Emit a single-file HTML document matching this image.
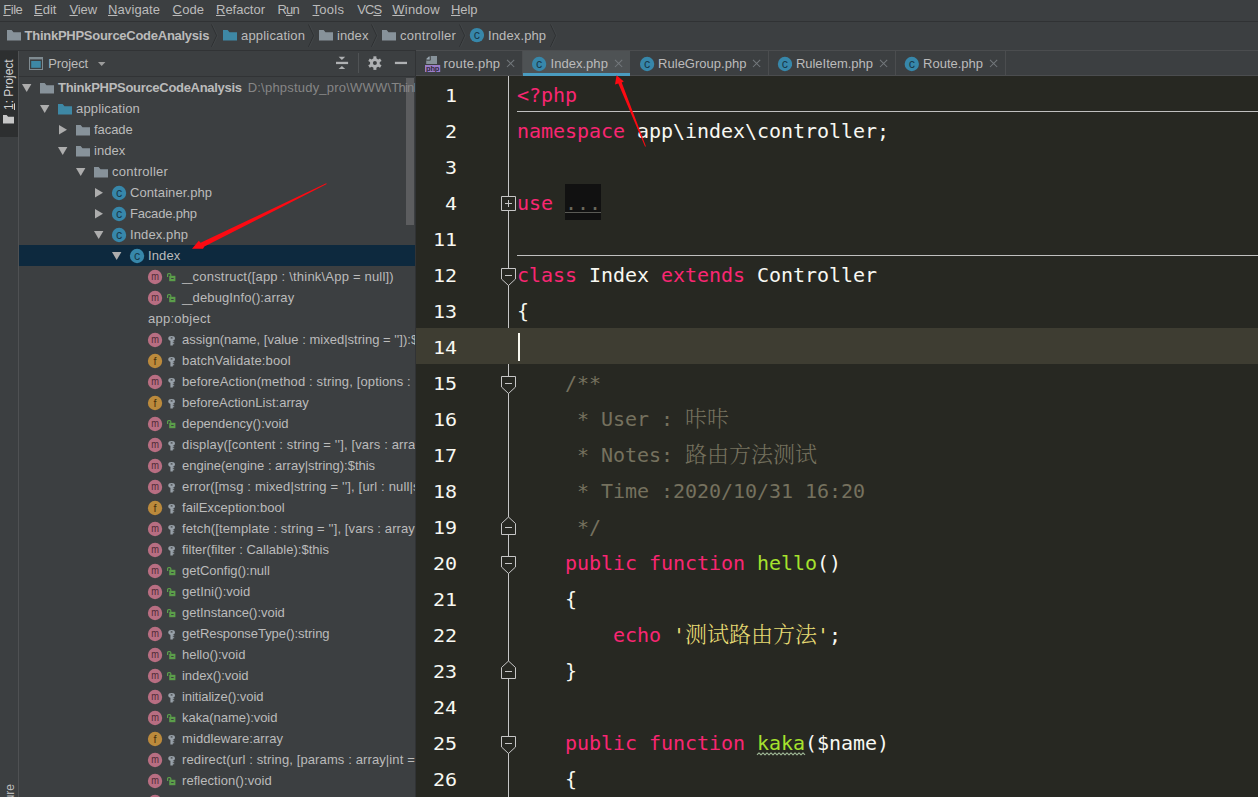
<!DOCTYPE html>
<html><head><meta charset="utf-8"><title>ThinkPHPSourceCodeAnalysis</title>
<style>
*{box-sizing:border-box;margin:0;padding:0}
html,body{width:1258px;height:797px;overflow:hidden;background:#3c3f41}
body{font-family:"Liberation Sans","Noto Sans CJK SC",sans-serif;font-size:13px;color:#bbbbbb;position:relative}
svg{display:block}
#menubar{position:absolute;left:0;top:0;width:1258px;height:22px;background:#3c3f41;border-bottom:1px solid #303234}
#menubar span{position:absolute;top:1px;line-height:17px;white-space:pre}
#menubar u{text-decoration:underline;text-underline-offset:1px;text-decoration-thickness:1px}
#crumbs{position:absolute;left:0;top:22px;width:1258px;height:29px;background:#3c3f41}
#crumbs .bl{position:absolute;left:0;top:28px;width:416px;height:1px;background:#313335}
#crumbs .br{position:absolute;left:416px;top:28px;width:842px;height:1px;background:#4b4d4f}
#crumbs .i{position:absolute}
#crumbs .t{position:absolute;top:4.5px;line-height:18px;white-space:pre}
#crumbs .sep{position:absolute;top:2px}
#strip{position:absolute;left:0;top:51px;width:19px;height:746px;background:#3c3f41;border-right:1px solid #4f5153}
#strip .on{position:absolute;left:0;top:0;width:18px;height:86px;background:#2d2f30}
#strip .vt u{text-underline-offset:0.5px}
#strip .vt{position:absolute;white-space:pre;transform-origin:0 0;transform:rotate(-90deg);line-height:14px;color:#d2d2d2;font-size:12px}
#proj{position:absolute;left:19px;top:51px;width:397px;height:746px;background:#3c3f41;overflow:hidden;border-right:1px solid #313335}
#phead{position:absolute;left:0;top:0;width:396px;height:26px;border-bottom:1px solid #313335}
#phead svg{position:absolute}
#tree{position:absolute;left:0;top:26px;width:396px;height:720px;overflow:hidden}
.row{position:absolute;left:0;width:396px;height:21px}
.row.sel{background:#0d293e}
.row .a,.row .i,.row .v{position:absolute}
.row .t{position:absolute;top:2px;line-height:18px;white-space:pre}
.row b{font-weight:bold;letter-spacing:-0.3px}
.pth{color:#868686;margin-left:6px}
#thumb{position:absolute;left:387px;top:27px;width:8px;height:147px;background:#5c5d5f}
#ed{position:absolute;left:416px;top:51px;width:842px;height:746px;background:#272822;overflow:hidden}
#tabs{position:absolute;left:0;top:0;width:842px;height:25px;background:#3c3f41;border-bottom:1px solid #4b4d4f}
.tab{position:absolute;top:0;height:24px;border-right:1px solid #4b4d4f}
.tab.act{background:#4e5254;height:25px;border-bottom:3px solid #4a9cc0;border-right:none}
.tab .ti{position:absolute}
.tab .tt{position:absolute;top:3.5px;line-height:18px;white-space:pre}
.tab .tx{position:absolute;top:8px}
#code{position:absolute;left:0;top:25px;width:842px;height:722px;letter-spacing:-0.04px;font-family:"DejaVu Sans Mono","Liberation Mono","Noto Serif CJK SC",monospace;font-size:20px;color:#f8f8f2}
.ln{position:absolute;left:0;width:842px;height:36px;line-height:36px;white-space:pre}
.ln.cur{background:#3e3d32}
.no{position:absolute;right:801px;top:1px;color:#f8f8f2;transform:scaleY(0.92);transform-origin:0 25px}
.cd{position:absolute;left:101px;top:1px}
.k{color:#f92672}.f{color:#a6e22e}.s{color:#e6db74}.c{color:#75715e}
.zh{font-family:"Noto Serif CJK SC",serif;font-size:22px;font-weight:300;letter-spacing:0;line-height:0}
.fold{background:#111111;color:#6a695d;display:inline-block;height:36px;position:relative;top:-1px;line-height:38px;vertical-align:top}
.fold i{position:absolute;left:0;right:0;top:28px;height:1px;background:#5a5a55}
.typo{text-decoration:underline wavy #7a9a50;text-decoration-thickness:1px;text-underline-offset:3px}
#foldline{position:absolute;left:92px;top:0;width:1px;height:722px;background:#c6c6c6}
.fi{position:absolute;left:85px}
.hsep{position:absolute;left:101px;width:741px;height:1px;background:#c0c0c0}
#caret{position:absolute;left:101.5px;top:257px;width:2px;height:28px;background:#f8f8f0}
#arrows{position:absolute;left:0;top:0;width:1258px;height:797px;pointer-events:none}
</style></head><body>
<div id="menubar"><span style="left:3.3px;letter-spacing:-0.488px;"><u>F</u>ile</span><span style="left:34px;letter-spacing:0.023px;"><u>E</u>dit</span><span style="left:69.5px;letter-spacing:-0.113px;"><u>V</u>iew</span><span style="left:108px;letter-spacing:0.098px;"><u>N</u>avigate</span><span style="left:172.6px;letter-spacing:0.13px;"><u>C</u>ode</span><span style="left:216px;letter-spacing:-0.018px;"><u>R</u>efactor</span><span style="left:277.4px;letter-spacing:-0.786px;">R<u>u</u>n</span><span style="left:312.5px;letter-spacing:0.288px;"><u>T</u>ools</span><span style="left:357.3px;letter-spacing:-0.978px;">VC<u>S</u></span><span style="left:392.3px;letter-spacing:0.208px;"><u>W</u>indow</span><span style="left:451px;letter-spacing:-0.087px;"><u>H</u>elp</span></div>
<div id="crumbs"><div class="bl"></div><div class="br"></div>
<span class="i" style="left:7px;top:7.5px"><svg class="ic" width="14" height="11" viewBox="0 0 14 11"><path d="M0 0h4.6l1.9 2.2H14v8.3H0z" fill="#87929a"/></svg></span><span class="t" style="left:24.6px"><b style="letter-spacing:-0.267px;">ThinkPHPSourceCodeAnalysis</b></span><svg class="sep" style="left:211px" width="8" height="24" viewBox="0 0 8 24"><path d="M0.5 0.5L5.7 11.6L0.5 22.8" fill="none" stroke="#2e3032" stroke-width="1"/><path d="M1.5 0.5L6.7 11.6L1.5 22.8" fill="none" stroke="#44474a" stroke-width="0.8"/></svg><span class="i" style="left:222.8px;top:7.5px"><svg class="ic" width="14" height="11" viewBox="0 0 14 11"><path d="M0 0h4.6l1.9 2.2H14v8.3H0z" fill="#3e88a5"/></svg></span><span class="t" style="left:241px;letter-spacing:0.186px;">application</span><svg class="sep" style="left:308px" width="8" height="24" viewBox="0 0 8 24"><path d="M0.5 0.5L5.7 11.6L0.5 22.8" fill="none" stroke="#2e3032" stroke-width="1"/><path d="M1.5 0.5L6.7 11.6L1.5 22.8" fill="none" stroke="#44474a" stroke-width="0.8"/></svg><span class="i" style="left:318.9px;top:7.5px"><svg class="ic" width="14" height="11" viewBox="0 0 14 11"><path d="M0 0h4.6l1.9 2.2H14v8.3H0z" fill="#87929a"/></svg></span><span class="t" style="left:337px;letter-spacing:0.084px;">index</span><svg class="sep" style="left:371px" width="8" height="24" viewBox="0 0 8 24"><path d="M0.5 0.5L5.7 11.6L0.5 22.8" fill="none" stroke="#2e3032" stroke-width="1"/><path d="M1.5 0.5L6.7 11.6L1.5 22.8" fill="none" stroke="#44474a" stroke-width="0.8"/></svg><span class="i" style="left:381.9px;top:7.5px"><svg class="ic" width="14" height="11" viewBox="0 0 14 11"><path d="M0 0h4.6l1.9 2.2H14v8.3H0z" fill="#87929a"/></svg></span><span class="t" style="left:400px;letter-spacing:0.273px;">controller</span><svg class="sep" style="left:459px" width="8" height="24" viewBox="0 0 8 24"><path d="M0.5 0.5L5.7 11.6L0.5 22.8" fill="none" stroke="#2e3032" stroke-width="1"/><path d="M1.5 0.5L6.7 11.6L1.5 22.8" fill="none" stroke="#44474a" stroke-width="0.8"/></svg><span class="i" style="left:468px;top:5px"><svg class="ic" width="16" height="16" viewBox="0 0 16 16"><circle cx="8.9" cy="8.1" r="7.15" fill="#3787aa"/><text transform="translate(8.9,11.6) scale(1,1)" text-anchor="middle" font-family="Liberation Sans, sans-serif" font-size="12.5" fill="#173a4c">c</text></svg></span><span class="t" style="left:488px;letter-spacing:0.121px;">Index.php</span><svg class="sep" style="left:549.7px" width="8" height="24" viewBox="0 0 8 24"><path d="M0.5 0.5L5.7 11.6L0.5 22.8" fill="none" stroke="#2e3032" stroke-width="1"/><path d="M1.5 0.5L6.7 11.6L1.5 22.8" fill="none" stroke="#44474a" stroke-width="0.8"/></svg>
</div>
<div id="strip"><div class="on"></div><span class="vt" style="left:1.8px;top:59.4px"><u>1</u>: Project</span>
<span style="position:absolute;left:2.8px;top:64px"><svg width="11" height="9" viewBox="0 0 14 11" preserveAspectRatio="none"><path d="M0 0h4.6l1.9 2.2H14v8.3H0z" fill="#c6c6c6"/></svg></span>
<span class="vt" style="left:3px;top:795px;color:#bbbbbb">7: Structure</span></div>
<div id="proj">
<div id="phead"><svg style="left:10px;top:6px" width="14" height="13" viewBox="0 0 14 13"><rect x="0.5" y="0.5" width="13" height="12" fill="none" stroke="#7f8b91" stroke-width="1"/><rect x="0" y="0" width="14" height="2.4" fill="#7f8b91"/><rect x="2.2" y="4" width="9.6" height="6.8" fill="#3e88a5"/></svg><span style="position:absolute;left:29.299999999999997px;top:4px;line-height:18px;letter-spacing:-0.096px;">Project</span><svg style="left:78.9px;top:11px" width="8" height="4" viewBox="0 0 8 4"><path d="M0 0h7.4L3.7 4z" fill="#9c9c9c"/></svg><svg style="left:316px;top:5px" width="14" height="14" viewBox="0 0 14 14"><path d="M3.6 0.8h6.6L6.9 4.1z" fill="#afb1b3"/><rect x="1" y="5.8" width="12.1" height="2.3" fill="#afb1b3"/><path d="M3.6 13.1h6.6L6.9 9.9z" fill="#afb1b3"/></svg><svg style="left:339px;top:2px" width="1" height="20" viewBox="0 0 1 20"><rect width="1" height="20" fill="#505355"/></svg><svg style="left:348px;top:4px" width="16" height="16" viewBox="-7.9 -8.1 16 16"><circle r="3.45" fill="none" stroke="#afb1b3" stroke-width="2.9"/><rect x="-1.5" y="-6.8" width="3" height="3" transform="rotate(0)" fill="#afb1b3"/><rect x="-1.5" y="-6.8" width="3" height="3" transform="rotate(60)" fill="#afb1b3"/><rect x="-1.5" y="-6.8" width="3" height="3" transform="rotate(120)" fill="#afb1b3"/><rect x="-1.5" y="-6.8" width="3" height="3" transform="rotate(180)" fill="#afb1b3"/><rect x="-1.5" y="-6.8" width="3" height="3" transform="rotate(240)" fill="#afb1b3"/><rect x="-1.5" y="-6.8" width="3" height="3" transform="rotate(300)" fill="#afb1b3"/></svg><svg style="left:375px;top:10px" width="14" height="4" viewBox="0 0 14 4"><rect x="0.9" y="0.8" width="12.1" height="2.3" fill="#afb1b3"/></svg></div>
<div id="thumb"></div>
<div id="tree">
<div class="row" style="top:0px"><span class="a" style="left:3px;top:7px"><svg class="ar" width="10" height="8" viewBox="0 0 10 8"><path d="M0 0h9.4L4.7 8z" fill="#adadad"/></svg></span><span class="i" style="left:21px;top:5.5px"><svg class="ic" width="14" height="11" viewBox="0 0 14 11"><path d="M0 0h4.6l1.9 2.2H14v8.3H0z" fill="#87929a"/></svg></span><span class="t" style="left:39px"><b style="letter-spacing:-0.298px;">ThinkPHPSourceCodeAnalysis</b><span class="pth" style="letter-spacing:0.208px;">D:\phpstudy_pro\WWW\<span style="letter-spacing:-0.75px">ThinkPHPSourceCodeAnalysis</span></span></span></div>
<div class="row" style="top:21px"><span class="a" style="left:21px;top:7px"><svg class="ar" width="10" height="8" viewBox="0 0 10 8"><path d="M0 0h9.4L4.7 8z" fill="#adadad"/></svg></span><span class="i" style="left:39px;top:5.5px"><svg class="ic" width="14" height="11" viewBox="0 0 14 11"><path d="M0 0h4.6l1.9 2.2H14v8.3H0z" fill="#3e88a5"/></svg></span><span class="t" style="left:57px;letter-spacing:0.168px;">application</span></div>
<div class="row" style="top:42px"><span class="a" style="left:40px;top:5.7px"><svg class="ar" width="8" height="10" viewBox="0 0 8 10"><path d="M0 0v9.6L8 4.8z" fill="#adadad"/></svg></span><span class="i" style="left:57px;top:5.5px"><svg class="ic" width="14" height="11" viewBox="0 0 14 11"><path d="M0 0h4.6l1.9 2.2H14v8.3H0z" fill="#87929a"/></svg></span><span class="t" style="left:75px;letter-spacing:-0.058px;">facade</span></div>
<div class="row" style="top:63px"><span class="a" style="left:39px;top:7px"><svg class="ar" width="10" height="8" viewBox="0 0 10 8"><path d="M0 0h9.4L4.7 8z" fill="#adadad"/></svg></span><span class="i" style="left:57px;top:5.5px"><svg class="ic" width="14" height="11" viewBox="0 0 14 11"><path d="M0 0h4.6l1.9 2.2H14v8.3H0z" fill="#87929a"/></svg></span><span class="t" style="left:75px;letter-spacing:0.044px;">index</span></div>
<div class="row" style="top:84px"><span class="a" style="left:57px;top:7px"><svg class="ar" width="10" height="8" viewBox="0 0 10 8"><path d="M0 0h9.4L4.7 8z" fill="#adadad"/></svg></span><span class="i" style="left:75px;top:5.5px"><svg class="ic" width="14" height="11" viewBox="0 0 14 11"><path d="M0 0h4.6l1.9 2.2H14v8.3H0z" fill="#87929a"/></svg></span><span class="t" style="left:93px;letter-spacing:0.273px;">controller</span></div>
<div class="row" style="top:105px"><span class="a" style="left:76px;top:5.7px"><svg class="ar" width="8" height="10" viewBox="0 0 8 10"><path d="M0 0v9.6L8 4.8z" fill="#adadad"/></svg></span><span class="i" style="left:92px;top:3px"><svg class="ic" width="16" height="16" viewBox="0 0 16 16"><circle cx="8.05" cy="8.0" r="7.15" fill="#3787aa"/><text transform="translate(8.05,11.5) scale(1,1)" text-anchor="middle" font-family="Liberation Sans, sans-serif" font-size="12.5" fill="#173a4c">c</text></svg></span><span class="t" style="left:111px;letter-spacing:0.088px;">Container.php</span></div>
<div class="row" style="top:126px"><span class="a" style="left:76px;top:5.7px"><svg class="ar" width="8" height="10" viewBox="0 0 8 10"><path d="M0 0v9.6L8 4.8z" fill="#adadad"/></svg></span><span class="i" style="left:92px;top:3px"><svg class="ic" width="16" height="16" viewBox="0 0 16 16"><circle cx="8.05" cy="8.0" r="7.15" fill="#3787aa"/><text transform="translate(8.05,11.5) scale(1,1)" text-anchor="middle" font-family="Liberation Sans, sans-serif" font-size="12.5" fill="#173a4c">c</text></svg></span><span class="t" style="left:111px;letter-spacing:-0.187px;">Facade.php</span></div>
<div class="row" style="top:147px"><span class="a" style="left:75px;top:7px"><svg class="ar" width="10" height="8" viewBox="0 0 10 8"><path d="M0 0h9.4L4.7 8z" fill="#adadad"/></svg></span><span class="i" style="left:92px;top:3px"><svg class="ic" width="16" height="16" viewBox="0 0 16 16"><circle cx="8.05" cy="8.0" r="7.15" fill="#3787aa"/><text transform="translate(8.05,11.5) scale(1,1)" text-anchor="middle" font-family="Liberation Sans, sans-serif" font-size="12.5" fill="#173a4c">c</text></svg></span><span class="t" style="left:111px;letter-spacing:0.11px;">Index.php</span></div>
<div class="row sel" style="top:168px"><span class="a" style="left:93px;top:7px"><svg class="ar" width="10" height="8" viewBox="0 0 10 8"><path d="M0 0h9.4L4.7 8z" fill="#adadad"/></svg></span><span class="i" style="left:110px;top:3px"><svg class="ic" width="16" height="16" viewBox="0 0 16 16"><circle cx="8.05" cy="8.0" r="7.15" fill="#3787aa"/><text transform="translate(8.05,11.5) scale(1,1)" text-anchor="middle" font-family="Liberation Sans, sans-serif" font-size="12.5" fill="#173a4c">c</text></svg></span><span class="t" style="left:129px;letter-spacing:0.137px;">Index</span></div>
<div class="row" style="top:189px"><span class="i" style="left:128px;top:3px"><svg class="ic" width="16" height="16" viewBox="0 0 16 16"><circle cx="8.05" cy="8.0" r="7.15" fill="#b86e82"/><text transform="translate(8.05,10.9) scale(0.86,1)" text-anchor="middle" font-family="Liberation Sans, sans-serif" font-size="10.8" fill="#4d2a34">m</text></svg></span><span class="v" style="left:147.8px;top:7px"><svg class="vis" width="10" height="10" viewBox="0 0 10 10"><path d="M2.2 2.8h6.2v5.4H2.2z" fill="#5b9e4a"/><path d="M0.6 4V1.6a1 1 0 0 1 1-1h1.2a1 1 0 0 1 1 1V3" fill="none" stroke="#5b9e4a" stroke-width="1.2"/><rect x="4.2" y="5" width="2.4" height="1" fill="#3c3f41"/></svg></span><span class="t" style="left:163px;letter-spacing:0.202px;"><span style="display:inline-block;width:10.6px;letter-spacing:0;transform:scaleX(0.733);transform-origin:0 50%">__</span>construct([app : \think\App = null])</span></div>
<div class="row" style="top:210px"><span class="i" style="left:128px;top:3px"><svg class="ic" width="16" height="16" viewBox="0 0 16 16"><circle cx="8.05" cy="8.0" r="7.15" fill="#b86e82"/><text transform="translate(8.05,10.9) scale(0.86,1)" text-anchor="middle" font-family="Liberation Sans, sans-serif" font-size="10.8" fill="#4d2a34">m</text></svg></span><span class="v" style="left:147.8px;top:7px"><svg class="vis" width="10" height="10" viewBox="0 0 10 10"><path d="M2.2 2.8h6.2v5.4H2.2z" fill="#5b9e4a"/><path d="M0.6 4V1.6a1 1 0 0 1 1-1h1.2a1 1 0 0 1 1 1V3" fill="none" stroke="#5b9e4a" stroke-width="1.2"/><rect x="4.2" y="5" width="2.4" height="1" fill="#3c3f41"/></svg></span><span class="t" style="left:163px;letter-spacing:0.116px;"><span style="display:inline-block;width:10.6px;letter-spacing:0;transform:scaleX(0.733);transform-origin:0 50%">__</span>debugInfo():array</span></div>
<div class="row" style="top:231px"><span class="t" style="left:129px;letter-spacing:0.26px;">app:object</span></div>
<div class="row" style="top:252px"><span class="i" style="left:128px;top:3px"><svg class="ic" width="16" height="16" viewBox="0 0 16 16"><circle cx="8.05" cy="8.0" r="7.15" fill="#b86e82"/><text transform="translate(8.05,10.9) scale(0.86,1)" text-anchor="middle" font-family="Liberation Sans, sans-serif" font-size="10.8" fill="#4d2a34">m</text></svg></span><span class="v" style="left:148.5px;top:6.8px"><svg class="vis" width="8" height="10" viewBox="0 0 8 10"><ellipse cx="3.6" cy="2.4" rx="3.3" ry="2.3" fill="#98a1a9"/><ellipse cx="3.6" cy="1.9" rx="1.1" ry="0.6" fill="#3c3f41"/><path d="M2.4 4h2.4v1.2h1.4v1H4.8v1h1.4v1.1H4.8V9.4H2.4z" fill="#98a1a9"/></svg></span><span class="t" style="left:163px;letter-spacing:0.013px;">assign(name, [value : mixed|string = '']):$this</span></div>
<div class="row" style="top:273px"><span class="i" style="left:128px;top:3px"><svg class="ic" width="16" height="16" viewBox="0 0 16 16"><circle cx="8.05" cy="8.0" r="7.15" fill="#bb8a3c"/><text transform="translate(8.05,11.8) scale(1,1)" text-anchor="middle" font-family="Liberation Sans, sans-serif" font-size="10.8" fill="#47300c">f</text></svg></span><span class="v" style="left:148.5px;top:6.8px"><svg class="vis" width="8" height="10" viewBox="0 0 8 10"><ellipse cx="3.6" cy="2.4" rx="3.3" ry="2.3" fill="#98a1a9"/><ellipse cx="3.6" cy="1.9" rx="1.1" ry="0.6" fill="#3c3f41"/><path d="M2.4 4h2.4v1.2h1.4v1H4.8v1h1.4v1.1H4.8V9.4H2.4z" fill="#98a1a9"/></svg></span><span class="t" style="left:163px;letter-spacing:0.155px;">batchValidate:bool</span></div>
<div class="row" style="top:294px"><span class="i" style="left:128px;top:3px"><svg class="ic" width="16" height="16" viewBox="0 0 16 16"><circle cx="8.05" cy="8.0" r="7.15" fill="#b86e82"/><text transform="translate(8.05,10.9) scale(0.86,1)" text-anchor="middle" font-family="Liberation Sans, sans-serif" font-size="10.8" fill="#4d2a34">m</text></svg></span><span class="v" style="left:148.5px;top:6.8px"><svg class="vis" width="8" height="10" viewBox="0 0 8 10"><ellipse cx="3.6" cy="2.4" rx="3.3" ry="2.3" fill="#98a1a9"/><ellipse cx="3.6" cy="1.9" rx="1.1" ry="0.6" fill="#3c3f41"/><path d="M2.4 4h2.4v1.2h1.4v1H4.8v1h1.4v1.1H4.8V9.4H2.4z" fill="#98a1a9"/></svg></span><span class="t" style="left:163px;letter-spacing:0.138px;">beforeAction(method : string, [options : </span></div>
<div class="row" style="top:315px"><span class="i" style="left:128px;top:3px"><svg class="ic" width="16" height="16" viewBox="0 0 16 16"><circle cx="8.05" cy="8.0" r="7.15" fill="#bb8a3c"/><text transform="translate(8.05,11.8) scale(1,1)" text-anchor="middle" font-family="Liberation Sans, sans-serif" font-size="10.8" fill="#47300c">f</text></svg></span><span class="v" style="left:148.5px;top:6.8px"><svg class="vis" width="8" height="10" viewBox="0 0 8 10"><ellipse cx="3.6" cy="2.4" rx="3.3" ry="2.3" fill="#98a1a9"/><ellipse cx="3.6" cy="1.9" rx="1.1" ry="0.6" fill="#3c3f41"/><path d="M2.4 4h2.4v1.2h1.4v1H4.8v1h1.4v1.1H4.8V9.4H2.4z" fill="#98a1a9"/></svg></span><span class="t" style="left:163px;letter-spacing:0.02px;">beforeActionList:array</span></div>
<div class="row" style="top:336px"><span class="i" style="left:128px;top:3px"><svg class="ic" width="16" height="16" viewBox="0 0 16 16"><circle cx="8.05" cy="8.0" r="7.15" fill="#b86e82"/><text transform="translate(8.05,10.9) scale(0.86,1)" text-anchor="middle" font-family="Liberation Sans, sans-serif" font-size="10.8" fill="#4d2a34">m</text></svg></span><span class="v" style="left:147.8px;top:7px"><svg class="vis" width="10" height="10" viewBox="0 0 10 10"><path d="M2.2 2.8h6.2v5.4H2.2z" fill="#5b9e4a"/><path d="M0.6 4V1.6a1 1 0 0 1 1-1h1.2a1 1 0 0 1 1 1V3" fill="none" stroke="#5b9e4a" stroke-width="1.2"/><rect x="4.2" y="5" width="2.4" height="1" fill="#3c3f41"/></svg></span><span class="t" style="left:163px;letter-spacing:-0.028px;">dependency():void</span></div>
<div class="row" style="top:357px"><span class="i" style="left:128px;top:3px"><svg class="ic" width="16" height="16" viewBox="0 0 16 16"><circle cx="8.05" cy="8.0" r="7.15" fill="#b86e82"/><text transform="translate(8.05,10.9) scale(0.86,1)" text-anchor="middle" font-family="Liberation Sans, sans-serif" font-size="10.8" fill="#4d2a34">m</text></svg></span><span class="v" style="left:148.5px;top:6.8px"><svg class="vis" width="8" height="10" viewBox="0 0 8 10"><ellipse cx="3.6" cy="2.4" rx="3.3" ry="2.3" fill="#98a1a9"/><ellipse cx="3.6" cy="1.9" rx="1.1" ry="0.6" fill="#3c3f41"/><path d="M2.4 4h2.4v1.2h1.4v1H4.8v1h1.4v1.1H4.8V9.4H2.4z" fill="#98a1a9"/></svg></span><span class="t" style="left:163px;letter-spacing:0.156px;">display([content : string = ''], [vars : array = []]):mixed</span></div>
<div class="row" style="top:378px"><span class="i" style="left:128px;top:3px"><svg class="ic" width="16" height="16" viewBox="0 0 16 16"><circle cx="8.05" cy="8.0" r="7.15" fill="#b86e82"/><text transform="translate(8.05,10.9) scale(0.86,1)" text-anchor="middle" font-family="Liberation Sans, sans-serif" font-size="10.8" fill="#4d2a34">m</text></svg></span><span class="v" style="left:148.5px;top:6.8px"><svg class="vis" width="8" height="10" viewBox="0 0 8 10"><ellipse cx="3.6" cy="2.4" rx="3.3" ry="2.3" fill="#98a1a9"/><ellipse cx="3.6" cy="1.9" rx="1.1" ry="0.6" fill="#3c3f41"/><path d="M2.4 4h2.4v1.2h1.4v1H4.8v1h1.4v1.1H4.8V9.4H2.4z" fill="#98a1a9"/></svg></span><span class="t" style="left:163px;letter-spacing:-0.01px;">engine(engine : array|string):$this</span></div>
<div class="row" style="top:399px"><span class="i" style="left:128px;top:3px"><svg class="ic" width="16" height="16" viewBox="0 0 16 16"><circle cx="8.05" cy="8.0" r="7.15" fill="#b86e82"/><text transform="translate(8.05,10.9) scale(0.86,1)" text-anchor="middle" font-family="Liberation Sans, sans-serif" font-size="10.8" fill="#4d2a34">m</text></svg></span><span class="v" style="left:148.5px;top:6.8px"><svg class="vis" width="8" height="10" viewBox="0 0 8 10"><ellipse cx="3.6" cy="2.4" rx="3.3" ry="2.3" fill="#98a1a9"/><ellipse cx="3.6" cy="1.9" rx="1.1" ry="0.6" fill="#3c3f41"/><path d="M2.4 4h2.4v1.2h1.4v1H4.8v1h1.4v1.1H4.8V9.4H2.4z" fill="#98a1a9"/></svg></span><span class="t" style="left:163px;letter-spacing:0.163px;">error([msg : mixed|string = ''], [url : null|string = null]):void</span></div>
<div class="row" style="top:420px"><span class="i" style="left:128px;top:3px"><svg class="ic" width="16" height="16" viewBox="0 0 16 16"><circle cx="8.05" cy="8.0" r="7.15" fill="#bb8a3c"/><text transform="translate(8.05,11.8) scale(1,1)" text-anchor="middle" font-family="Liberation Sans, sans-serif" font-size="10.8" fill="#47300c">f</text></svg></span><span class="v" style="left:148.5px;top:6.8px"><svg class="vis" width="8" height="10" viewBox="0 0 8 10"><ellipse cx="3.6" cy="2.4" rx="3.3" ry="2.3" fill="#98a1a9"/><ellipse cx="3.6" cy="1.9" rx="1.1" ry="0.6" fill="#3c3f41"/><path d="M2.4 4h2.4v1.2h1.4v1H4.8v1h1.4v1.1H4.8V9.4H2.4z" fill="#98a1a9"/></svg></span><span class="t" style="left:163px;letter-spacing:0.044px;">failException:bool</span></div>
<div class="row" style="top:441px"><span class="i" style="left:128px;top:3px"><svg class="ic" width="16" height="16" viewBox="0 0 16 16"><circle cx="8.05" cy="8.0" r="7.15" fill="#b86e82"/><text transform="translate(8.05,10.9) scale(0.86,1)" text-anchor="middle" font-family="Liberation Sans, sans-serif" font-size="10.8" fill="#4d2a34">m</text></svg></span><span class="v" style="left:148.5px;top:6.8px"><svg class="vis" width="8" height="10" viewBox="0 0 8 10"><ellipse cx="3.6" cy="2.4" rx="3.3" ry="2.3" fill="#98a1a9"/><ellipse cx="3.6" cy="1.9" rx="1.1" ry="0.6" fill="#3c3f41"/><path d="M2.4 4h2.4v1.2h1.4v1H4.8v1h1.4v1.1H4.8V9.4H2.4z" fill="#98a1a9"/></svg></span><span class="t" style="left:163px;letter-spacing:0.114px;">fetch([template : string = ''], [vars : array = []]):mixed</span></div>
<div class="row" style="top:462px"><span class="i" style="left:128px;top:3px"><svg class="ic" width="16" height="16" viewBox="0 0 16 16"><circle cx="8.05" cy="8.0" r="7.15" fill="#b86e82"/><text transform="translate(8.05,10.9) scale(0.86,1)" text-anchor="middle" font-family="Liberation Sans, sans-serif" font-size="10.8" fill="#4d2a34">m</text></svg></span><span class="v" style="left:148.5px;top:6.8px"><svg class="vis" width="8" height="10" viewBox="0 0 8 10"><ellipse cx="3.6" cy="2.4" rx="3.3" ry="2.3" fill="#98a1a9"/><ellipse cx="3.6" cy="1.9" rx="1.1" ry="0.6" fill="#3c3f41"/><path d="M2.4 4h2.4v1.2h1.4v1H4.8v1h1.4v1.1H4.8V9.4H2.4z" fill="#98a1a9"/></svg></span><span class="t" style="left:163px;letter-spacing:0.008px;">filter(filter : Callable):$this</span></div>
<div class="row" style="top:483px"><span class="i" style="left:128px;top:3px"><svg class="ic" width="16" height="16" viewBox="0 0 16 16"><circle cx="8.05" cy="8.0" r="7.15" fill="#b86e82"/><text transform="translate(8.05,10.9) scale(0.86,1)" text-anchor="middle" font-family="Liberation Sans, sans-serif" font-size="10.8" fill="#4d2a34">m</text></svg></span><span class="v" style="left:147.8px;top:7px"><svg class="vis" width="10" height="10" viewBox="0 0 10 10"><path d="M2.2 2.8h6.2v5.4H2.2z" fill="#5b9e4a"/><path d="M0.6 4V1.6a1 1 0 0 1 1-1h1.2a1 1 0 0 1 1 1V3" fill="none" stroke="#5b9e4a" stroke-width="1.2"/><rect x="4.2" y="5" width="2.4" height="1" fill="#3c3f41"/></svg></span><span class="t" style="left:163px;letter-spacing:-0.022px;">getConfig():null</span></div>
<div class="row" style="top:504px"><span class="i" style="left:128px;top:3px"><svg class="ic" width="16" height="16" viewBox="0 0 16 16"><circle cx="8.05" cy="8.0" r="7.15" fill="#b86e82"/><text transform="translate(8.05,10.9) scale(0.86,1)" text-anchor="middle" font-family="Liberation Sans, sans-serif" font-size="10.8" fill="#4d2a34">m</text></svg></span><span class="v" style="left:147.8px;top:7px"><svg class="vis" width="10" height="10" viewBox="0 0 10 10"><path d="M2.2 2.8h6.2v5.4H2.2z" fill="#5b9e4a"/><path d="M0.6 4V1.6a1 1 0 0 1 1-1h1.2a1 1 0 0 1 1 1V3" fill="none" stroke="#5b9e4a" stroke-width="1.2"/><rect x="4.2" y="5" width="2.4" height="1" fill="#3c3f41"/></svg></span><span class="t" style="left:163px;letter-spacing:0.029px;">getIni():void</span></div>
<div class="row" style="top:525px"><span class="i" style="left:128px;top:3px"><svg class="ic" width="16" height="16" viewBox="0 0 16 16"><circle cx="8.05" cy="8.0" r="7.15" fill="#b86e82"/><text transform="translate(8.05,10.9) scale(0.86,1)" text-anchor="middle" font-family="Liberation Sans, sans-serif" font-size="10.8" fill="#4d2a34">m</text></svg></span><span class="v" style="left:147.8px;top:7px"><svg class="vis" width="10" height="10" viewBox="0 0 10 10"><path d="M2.2 2.8h6.2v5.4H2.2z" fill="#5b9e4a"/><path d="M0.6 4V1.6a1 1 0 0 1 1-1h1.2a1 1 0 0 1 1 1V3" fill="none" stroke="#5b9e4a" stroke-width="1.2"/><rect x="4.2" y="5" width="2.4" height="1" fill="#3c3f41"/></svg></span><span class="t" style="left:163px;letter-spacing:-0.036px;">getInstance():void</span></div>
<div class="row" style="top:546px"><span class="i" style="left:128px;top:3px"><svg class="ic" width="16" height="16" viewBox="0 0 16 16"><circle cx="8.05" cy="8.0" r="7.15" fill="#b86e82"/><text transform="translate(8.05,10.9) scale(0.86,1)" text-anchor="middle" font-family="Liberation Sans, sans-serif" font-size="10.8" fill="#4d2a34">m</text></svg></span><span class="v" style="left:148.5px;top:6.8px"><svg class="vis" width="8" height="10" viewBox="0 0 8 10"><ellipse cx="3.6" cy="2.4" rx="3.3" ry="2.3" fill="#98a1a9"/><ellipse cx="3.6" cy="1.9" rx="1.1" ry="0.6" fill="#3c3f41"/><path d="M2.4 4h2.4v1.2h1.4v1H4.8v1h1.4v1.1H4.8V9.4H2.4z" fill="#98a1a9"/></svg></span><span class="t" style="left:163px;letter-spacing:-0.057px;">getResponseType():string</span></div>
<div class="row" style="top:567px"><span class="i" style="left:128px;top:3px"><svg class="ic" width="16" height="16" viewBox="0 0 16 16"><circle cx="8.05" cy="8.0" r="7.15" fill="#b86e82"/><text transform="translate(8.05,10.9) scale(0.86,1)" text-anchor="middle" font-family="Liberation Sans, sans-serif" font-size="10.8" fill="#4d2a34">m</text></svg></span><span class="v" style="left:147.8px;top:7px"><svg class="vis" width="10" height="10" viewBox="0 0 10 10"><path d="M2.2 2.8h6.2v5.4H2.2z" fill="#5b9e4a"/><path d="M0.6 4V1.6a1 1 0 0 1 1-1h1.2a1 1 0 0 1 1 1V3" fill="none" stroke="#5b9e4a" stroke-width="1.2"/><rect x="4.2" y="5" width="2.4" height="1" fill="#3c3f41"/></svg></span><span class="t" style="left:163px;letter-spacing:-0.016px;">hello():void</span></div>
<div class="row" style="top:588px"><span class="i" style="left:128px;top:3px"><svg class="ic" width="16" height="16" viewBox="0 0 16 16"><circle cx="8.05" cy="8.0" r="7.15" fill="#b86e82"/><text transform="translate(8.05,10.9) scale(0.86,1)" text-anchor="middle" font-family="Liberation Sans, sans-serif" font-size="10.8" fill="#4d2a34">m</text></svg></span><span class="v" style="left:147.8px;top:7px"><svg class="vis" width="10" height="10" viewBox="0 0 10 10"><path d="M2.2 2.8h6.2v5.4H2.2z" fill="#5b9e4a"/><path d="M0.6 4V1.6a1 1 0 0 1 1-1h1.2a1 1 0 0 1 1 1V3" fill="none" stroke="#5b9e4a" stroke-width="1.2"/><rect x="4.2" y="5" width="2.4" height="1" fill="#3c3f41"/></svg></span><span class="t" style="left:163px;letter-spacing:-0.067px;">index():void</span></div>
<div class="row" style="top:609px"><span class="i" style="left:128px;top:3px"><svg class="ic" width="16" height="16" viewBox="0 0 16 16"><circle cx="8.05" cy="8.0" r="7.15" fill="#b86e82"/><text transform="translate(8.05,10.9) scale(0.86,1)" text-anchor="middle" font-family="Liberation Sans, sans-serif" font-size="10.8" fill="#4d2a34">m</text></svg></span><span class="v" style="left:148.5px;top:6.8px"><svg class="vis" width="8" height="10" viewBox="0 0 8 10"><ellipse cx="3.6" cy="2.4" rx="3.3" ry="2.3" fill="#98a1a9"/><ellipse cx="3.6" cy="1.9" rx="1.1" ry="0.6" fill="#3c3f41"/><path d="M2.4 4h2.4v1.2h1.4v1H4.8v1h1.4v1.1H4.8V9.4H2.4z" fill="#98a1a9"/></svg></span><span class="t" style="left:163px;letter-spacing:-0.051px;">initialize():void</span></div>
<div class="row" style="top:630px"><span class="i" style="left:128px;top:3px"><svg class="ic" width="16" height="16" viewBox="0 0 16 16"><circle cx="8.05" cy="8.0" r="7.15" fill="#b86e82"/><text transform="translate(8.05,10.9) scale(0.86,1)" text-anchor="middle" font-family="Liberation Sans, sans-serif" font-size="10.8" fill="#4d2a34">m</text></svg></span><span class="v" style="left:147.8px;top:7px"><svg class="vis" width="10" height="10" viewBox="0 0 10 10"><path d="M2.2 2.8h6.2v5.4H2.2z" fill="#5b9e4a"/><path d="M0.6 4V1.6a1 1 0 0 1 1-1h1.2a1 1 0 0 1 1 1V3" fill="none" stroke="#5b9e4a" stroke-width="1.2"/><rect x="4.2" y="5" width="2.4" height="1" fill="#3c3f41"/></svg></span><span class="t" style="left:163px;letter-spacing:-0.047px;">kaka(name):void</span></div>
<div class="row" style="top:651px"><span class="i" style="left:128px;top:3px"><svg class="ic" width="16" height="16" viewBox="0 0 16 16"><circle cx="8.05" cy="8.0" r="7.15" fill="#bb8a3c"/><text transform="translate(8.05,11.8) scale(1,1)" text-anchor="middle" font-family="Liberation Sans, sans-serif" font-size="10.8" fill="#47300c">f</text></svg></span><span class="v" style="left:148.5px;top:6.8px"><svg class="vis" width="8" height="10" viewBox="0 0 8 10"><ellipse cx="3.6" cy="2.4" rx="3.3" ry="2.3" fill="#98a1a9"/><ellipse cx="3.6" cy="1.9" rx="1.1" ry="0.6" fill="#3c3f41"/><path d="M2.4 4h2.4v1.2h1.4v1H4.8v1h1.4v1.1H4.8V9.4H2.4z" fill="#98a1a9"/></svg></span><span class="t" style="left:163px;letter-spacing:0.087px;">middleware:array</span></div>
<div class="row" style="top:672px"><span class="i" style="left:128px;top:3px"><svg class="ic" width="16" height="16" viewBox="0 0 16 16"><circle cx="8.05" cy="8.0" r="7.15" fill="#b86e82"/><text transform="translate(8.05,10.9) scale(0.86,1)" text-anchor="middle" font-family="Liberation Sans, sans-serif" font-size="10.8" fill="#4d2a34">m</text></svg></span><span class="v" style="left:148.5px;top:6.8px"><svg class="vis" width="8" height="10" viewBox="0 0 8 10"><ellipse cx="3.6" cy="2.4" rx="3.3" ry="2.3" fill="#98a1a9"/><ellipse cx="3.6" cy="1.9" rx="1.1" ry="0.6" fill="#3c3f41"/><path d="M2.4 4h2.4v1.2h1.4v1H4.8v1h1.4v1.1H4.8V9.4H2.4z" fill="#98a1a9"/></svg></span><span class="t" style="left:163px;letter-spacing:0.118px;">redirect(url : string, [params : array|int = []]):void</span></div>
<div class="row" style="top:693px"><span class="i" style="left:128px;top:3px"><svg class="ic" width="16" height="16" viewBox="0 0 16 16"><circle cx="8.05" cy="8.0" r="7.15" fill="#b86e82"/><text transform="translate(8.05,10.9) scale(0.86,1)" text-anchor="middle" font-family="Liberation Sans, sans-serif" font-size="10.8" fill="#4d2a34">m</text></svg></span><span class="v" style="left:147.8px;top:7px"><svg class="vis" width="10" height="10" viewBox="0 0 10 10"><path d="M2.2 2.8h6.2v5.4H2.2z" fill="#5b9e4a"/><path d="M0.6 4V1.6a1 1 0 0 1 1-1h1.2a1 1 0 0 1 1 1V3" fill="none" stroke="#5b9e4a" stroke-width="1.2"/><rect x="4.2" y="5" width="2.4" height="1" fill="#3c3f41"/></svg></span><span class="t" style="left:163px;letter-spacing:0.049px;">reflection():void</span></div>
<div class="row" style="top:714px"><span class="i" style="left:128px;top:3px"><svg class="ic" width="16" height="16" viewBox="0 0 16 16"><circle cx="8.05" cy="8.0" r="7.15" fill="#b86e82"/><text transform="translate(8.05,10.9) scale(0.86,1)" text-anchor="middle" font-family="Liberation Sans, sans-serif" font-size="10.8" fill="#4d2a34">m</text></svg></span><span class="v" style="left:147.8px;top:7px"><svg class="vis" width="10" height="10" viewBox="0 0 10 10"><path d="M2.2 2.8h6.2v5.4H2.2z" fill="#5b9e4a"/><path d="M0.6 4V1.6a1 1 0 0 1 1-1h1.2a1 1 0 0 1 1 1V3" fill="none" stroke="#5b9e4a" stroke-width="1.2"/><rect x="4.2" y="5" width="2.4" height="1" fill="#3c3f41"/></svg></span><span class="t" style="left:163px;letter-spacing:0.174px;">registerMiddleware():void</span></div>
</div>
</div>
<div id="ed">
<div id="tabs"><div class="tab" style="left:0px;width:107px"><span class="ti" style="left:9px;top:5px"><svg class="ic" width="16" height="16" viewBox="0 0 16 16"><path d="M5.2 0H12v8H1.2V4z" fill="#87929a"/><path d="M0.9 3.3L4.4 0v3.3z" fill="#9aa7b0"/><path d="M1.2 4.2h4.1V0" fill="none" stroke="#3c3f41" stroke-width="0.9"/><rect x="0" y="9" width="15.2" height="7" fill="#9b7dc8"/><text x="7.6" y="14.6" text-anchor="middle" font-family="Liberation Sans, sans-serif" font-size="7.5" font-weight="bold" fill="#2e2838" letter-spacing="-0.2">php</text></svg></span><span class="tt" style="left:27.5px;letter-spacing:0.207px;">route.php</span><svg class="tx" style="left:90.2px" width="9" height="9" viewBox="0 0 9 9"><path d="M1 0.8l7.2 7.2M8.2 0.8L1 8" stroke="#73787c" stroke-width="1.05" fill="none"/></svg></div><div class="tab act" style="left:107px;width:107px"><span class="ti" style="left:8px;top:5px"><svg class="ic" width="16" height="16" viewBox="0 0 16 16"><circle cx="8.1" cy="8.0" r="7.15" fill="#3787aa"/><text transform="translate(8.1,11.5) scale(1,1)" text-anchor="middle" font-family="Liberation Sans, sans-serif" font-size="12.5" fill="#173a4c">c</text></svg></span><span class="tt" style="left:27.5px;letter-spacing:0.032px;">Index.php</span><svg class="tx" style="left:90.9px" width="9" height="9" viewBox="0 0 9 9"><path d="M1 0.8l7.2 7.2M8.2 0.8L1 8" stroke="#73787c" stroke-width="1.05" fill="none"/></svg></div><div class="tab" style="left:214px;width:139px"><span class="ti" style="left:9px;top:5px"><svg class="ic" width="16" height="16" viewBox="0 0 16 16"><circle cx="8.1" cy="8.0" r="7.15" fill="#3787aa"/><text transform="translate(8.1,11.5) scale(1,1)" text-anchor="middle" font-family="Liberation Sans, sans-serif" font-size="12.5" fill="#173a4c">c</text></svg></span><span class="tt" style="left:28.100000000000023px;letter-spacing:0.01px;">RuleGroup.php</span><svg class="tx" style="left:122.2px" width="9" height="9" viewBox="0 0 9 9"><path d="M1 0.8l7.2 7.2M8.2 0.8L1 8" stroke="#73787c" stroke-width="1.05" fill="none"/></svg></div><div class="tab" style="left:353px;width:127px"><span class="ti" style="left:7px;top:5px"><svg class="ic" width="16" height="16" viewBox="0 0 16 16"><circle cx="8.95" cy="8.0" r="7.15" fill="#3787aa"/><text transform="translate(8.95,11.5) scale(1,1)" text-anchor="middle" font-family="Liberation Sans, sans-serif" font-size="12.5" fill="#173a4c">c</text></svg></span><span class="tt" style="left:26.899999999999977px;letter-spacing:-0.019px;">RuleItem.php</span><svg class="tx" style="left:110.2px" width="9" height="9" viewBox="0 0 9 9"><path d="M1 0.8l7.2 7.2M8.2 0.8L1 8" stroke="#73787c" stroke-width="1.05" fill="none"/></svg></div><div class="tab" style="left:480px;width:110px"><span class="ti" style="left:7px;top:5px"><svg class="ic" width="16" height="16" viewBox="0 0 16 16"><circle cx="8.8" cy="8.0" r="7.15" fill="#3787aa"/><text transform="translate(8.8,11.5) scale(1,1)" text-anchor="middle" font-family="Liberation Sans, sans-serif" font-size="12.5" fill="#173a4c">c</text></svg></span><span class="tt" style="left:27.100000000000023px;letter-spacing:-0.022px;">Route.php</span><svg class="tx" style="left:93.2px" width="9" height="9" viewBox="0 0 9 9"><path d="M1 0.8l7.2 7.2M8.2 0.8L1 8" stroke="#73787c" stroke-width="1.05" fill="none"/></svg></div></div>
<div id="code">
<div id="foldline"></div>
<div class="ln" style="top:0px"><span class="no">1</span><span class="cd"><span class="k">&lt;?php</span></span></div>
<div class="ln" style="top:36px"><span class="no">2</span><span class="cd"><span class="k">namespace</span> app\index\controller;</span></div>
<div class="ln" style="top:72px"><span class="no">3</span><span class="cd"></span></div>
<div class="ln" style="top:108px"><span class="no">4</span><span class="cd"><span class="k">use</span> <span class="fold">...<i></i></span></span></div>
<svg class="fi" style="top:120px" width="16" height="16" viewBox="0 0 16 16"><path d="M0.5 0.5h14v14h-14z" fill="#272822" stroke="#c6c6c6" stroke-width="1"/><path d="M4 7.5h7M7.5 4v7" stroke="#c6c6c6" stroke-width="1" fill="none"/></svg>
<div class="ln" style="top:144px"><span class="no">11</span><span class="cd"></span></div>
<div class="ln" style="top:180px"><span class="no">12</span><span class="cd"><span class="k">class</span> Index <span class="k">extends</span> Controller</span></div>
<svg class="fi" style="top:192px" width="16" height="19" viewBox="0 0 16 19"><path d="M0.5 0.5h14v10.5l-7 6.5l-7-6.5z" fill="#272822" stroke="#c6c6c6" stroke-width="1"/><path d="M4 7.5h7" stroke="#c6c6c6" stroke-width="1" fill="none"/></svg>
<div class="ln" style="top:216px"><span class="no">13</span><span class="cd">{</span></div>
<div class="ln cur" style="top:252px"><span class="no">14</span><span class="cd"></span></div>
<div class="ln" style="top:288px"><span class="no">15</span><span class="cd">    <span class="c">/**</span></span></div>
<svg class="fi" style="top:300px" width="16" height="19" viewBox="0 0 16 19"><path d="M0.5 0.5h14v10.5l-7 6.5l-7-6.5z" fill="#272822" stroke="#c6c6c6" stroke-width="1"/><path d="M4 7.5h7" stroke="#c6c6c6" stroke-width="1" fill="none"/></svg>
<div class="ln" style="top:324px"><span class="no">16</span><span class="cd">    <span class="c"> * User : <span class="zh">咔咔</span></span></span></div>
<div class="ln" style="top:360px"><span class="no">17</span><span class="cd">    <span class="c"> * Notes: <span class="zh">路由方法测试</span></span></span></div>
<div class="ln" style="top:396px"><span class="no">18</span><span class="cd">    <span class="c"> * Time :2020/10/31 16:20</span></span></div>
<div class="ln" style="top:432px"><span class="no">19</span><span class="cd">    <span class="c"> */</span></span></div>
<svg class="fi" style="top:440px" width="16" height="20" viewBox="0 0 16 20"><path d="M0.5 18.5h14v-11l-7-6.5l-7 6.5z" fill="#272822" stroke="#c6c6c6" stroke-width="1"/><path d="M4 11.5h7" stroke="#c6c6c6" stroke-width="1" fill="none"/></svg>
<div class="ln" style="top:468px"><span class="no">20</span><span class="cd">    <span class="k">public</span> <span class="k">function</span> <span class="f">hello</span>()</span></div>
<svg class="fi" style="top:480px" width="16" height="19" viewBox="0 0 16 19"><path d="M0.5 0.5h14v10.5l-7 6.5l-7-6.5z" fill="#272822" stroke="#c6c6c6" stroke-width="1"/><path d="M4 7.5h7" stroke="#c6c6c6" stroke-width="1" fill="none"/></svg>
<div class="ln" style="top:504px"><span class="no">21</span><span class="cd">    {</span></div>
<div class="ln" style="top:540px"><span class="no">22</span><span class="cd">        <span class="k">echo</span> <span class="s">'<span class="zh">测试路由方法</span>'</span>;</span></div>
<div class="ln" style="top:576px"><span class="no">23</span><span class="cd">    }</span></div>
<svg class="fi" style="top:584px" width="16" height="20" viewBox="0 0 16 20"><path d="M0.5 18.5h14v-11l-7-6.5l-7 6.5z" fill="#272822" stroke="#c6c6c6" stroke-width="1"/><path d="M4 11.5h7" stroke="#c6c6c6" stroke-width="1" fill="none"/></svg>
<div class="ln" style="top:612px"><span class="no">24</span><span class="cd"></span></div>
<div class="ln" style="top:648px"><span class="no">25</span><span class="cd">    <span class="k">public</span> <span class="k">function</span> <span class="f">kaka</span>($name)</span></div>
<svg class="fi" style="top:660px" width="16" height="19" viewBox="0 0 16 19"><path d="M0.5 0.5h14v10.5l-7 6.5l-7-6.5z" fill="#272822" stroke="#c6c6c6" stroke-width="1"/><path d="M4 7.5h7" stroke="#c6c6c6" stroke-width="1" fill="none"/></svg>
<div class="ln" style="top:684px"><span class="no">26</span><span class="cd">    {</span></div>
<div class="hsep" style="top:35px"></div>
<div class="hsep" style="top:179px"></div>
<div id="caret"></div>
<svg style="position:absolute;left:0;top:0" width="842" height="722" viewBox="0 0 842 722"><path d="M341 678.9L343 676.9L345 678.9L347 676.9L349 678.9L351 676.9L353 678.9L355 676.9L357 678.9L359 676.9L361 678.9L363 676.9L365 678.9L367 676.9L369 678.9L371 676.9L373 678.9L375 676.9L377 678.9L379 676.9L381 678.9L383 676.9L385 678.9L387 676.9L389 678.9" fill="none" stroke="#9ab292" stroke-width="1.15" stroke-linejoin="round"/></svg>
</div>
</div>
<svg id="arrows" viewBox="0 0 1258 797">
<path d="M192 248.8L198.8 240.8L200.6 242.7L326.2 183.2L326.8 184.1L204.4 246.6L203 248.8z" fill="#fc0a12"/>
<path d="M616.6 75.2L615 84.4L618.3 83.6L645.1 146.7L645.9 146.3L621.7 82.4L623.8 81.4z" fill="#fc0a12"/>
</svg>
</body></html>
